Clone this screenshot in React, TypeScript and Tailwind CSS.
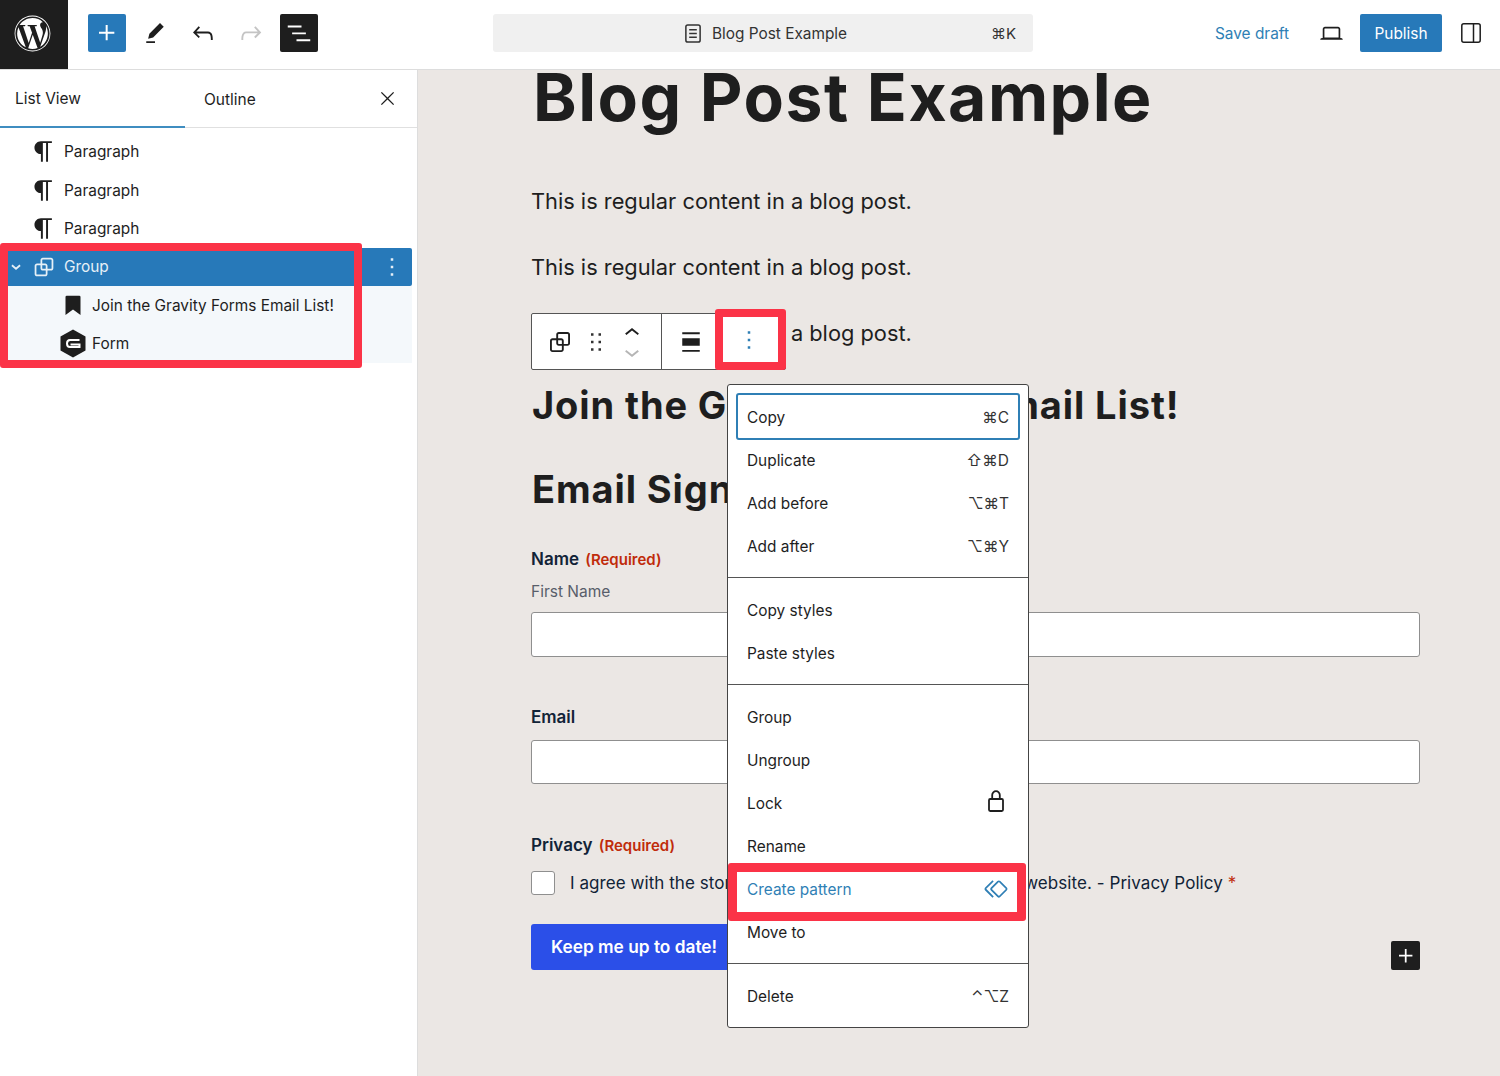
import { FaWordpress } from "react-icons/fa";

const P = {
	plus: "M11 12.5V17.5H12.5V12.5H17.5V11H12.5V6H11V11H6V12.5H11Z",
	pencil: "m19 7-3-3-8.5 8.5-1 4 4-1L19 7Zm-7 11.5H5V20h7v-1.5Z",
	undo: "M18.3 11.7c-.6-.6-1.4-.9-2.3-.9H6.7l2.9-3.3-1.1-1-4.5 5L8.5 16l1-1-2.7-2.7H16c.5 0 .9.2 1.3.5 1 1 1 3.4 1 4.5v.3h1.5v-.2c0-1.5 0-4.3-1.5-5.7z",
	redo: "M15.6 6.5l-1.1 1 2.9 3.3H8c-.9 0-1.7.3-2.3.9-1.4 1.5-1.4 4.2-1.4 5.6v.2h1.5v-.3c0-1.1 0-3.5 1-4.5.3-.3.7-.5 1.3-.5h9.2L14.5 15l1.1 1.1 4.6-4.6-4.6-5z",
	listView: "M3 6h11v1.5H3V6Zm3.5 5.5h11V13h-11v-1.5ZM21 17H10v1.5h11V17Z",
	close: "m13.06 12 6.47-6.47-1.06-1.06L12 10.94 5.53 4.47 4.47 5.53 10.94 12l-6.47 6.47 1.06 1.06L12 13.06l6.47 6.47 1.06-1.06L13.06 12Z",
	laptop: "M20.5 16h-.7V8c0-1.1-.9-2-2-2H6.2c-1.1 0-2 .9-2 2v8h-.7c-.8 0-1.5.7-1.5 1.5h20c0-.8-.7-1.5-1.5-1.5zM5.7 8c0-.3.2-.5.5-.5h11.6c.3 0 .5.2.5.5v7.6H5.7V8z",
	paragraph: "m9.99609 14v-.2251l.00391.0001v6.225h1.5v-14.5h2.5v14.5h1.5v-14.5h3v-1.5h-8.50391c-2.76142 0-5 2.23858-5 5 0 2.7614 2.23858 5 5 5z",
	group: "M18 4h-7c-1.1 0-2 .9-2 2v3H6c-1.1 0-2 .9-2 2v7c0 1.1.9 2 2 2h7c1.1 0 2-.9 2-2v-3h3c1.1 0 2-.9 2-2V6c0-1.1-.9-2-2-2zm-4.5 14c0 .3-.2.5-.5.5H6c-.3 0-.5-.2-.5-.5v-7c0-.3.2-.5.5-.5h3V13c0 1.1.9 2 2 2h2.5v3zm0-4.5H11c-.3 0-.5-.2-.5-.5v-2.5H13c.3 0 .5.2.5.5v2.5zm5-.5c0 .3-.2.5-.5.5h-3V11c0-1.1-.9-2-2-2h-2.5V6c0-.3.2-.5.5-.5h7c.3 0 .5.2.5.5v7z",
	more: "M13 19h-2v-2h2v2zm0-6h-2v-2h2v2zm0-6h-2V5h2v2z",
	drag: "M8 7h2V5H8v2zm0 6h2v-2H8v2zm0 6h2v-2H8v2zm6-14v2h2V5h-2zm0 8h2v-2h-2v2zm0 6h2v-2h-2v2z",
	up: "M6.5 12.4L12 8l5.5 4.4-.9 1.2L12 10l-4.5 3.6-1-1.2z",
	down: "M17.5 11.6L12 16l-5.5-4.4.9-1.2L12 14l4.5-3.6 1 1.2z",
	align: "M5 15h14V9H5v6zm0 4.8h14v-1.5H5v1.5zM5 4.2v1.5h14V4.2H5z",
	pattern: "M21.3 10.8l-5.6-5.6c-.7-.7-1.8-.7-2.5 0l-5.6 5.6c-.7.7-.7 1.8 0 2.5l5.6 5.6c.3.3.8.5 1.2.5s.9-.2 1.2-.5l5.6-5.6c.8-.7.8-1.9.1-2.5zm-1 1.4l-5.6 5.6c-.1.1-.3.1-.4 0l-5.6-5.6c-.1-.1-.1-.3 0-.4l5.6-5.6s.1-.1.2-.1.1 0 .2.1l5.6 5.6c.1.1.1.3 0 .4zm-16.6-.4L10 5.5l-1-1-6.3 6.3c-.7.7-.7 1.8 0 2.5L9 19.5l1.1-1.1-6.3-6.3c-.2 0-.2-.2-.1-.3z",
	bookmark: "M7 4.5h10a1 1 0 0 1 1 1V20l-6-4.4L6 20V5.5a1 1 0 0 1 1-1z",
};

function Icon({ d, className }: { d: string; className?: string }) {
	return (
		<svg viewBox="0 0 24 24" fill="currentColor" className={className}>
			<path d={d} />
		</svg>
	);
}

function ListRow({
	icon,
	label,
	className,
}: {
	icon: React.ReactNode;
	label: string;
	className?: string;
}) {
	return (
		<div className={`flex h-[38.4px] items-center text-[15.4px] ${className ?? ""}`}>
			{icon}
			<span>{label}</span>
		</div>
	);
}

function MenuItem({
	label,
	right,
	className,
}: {
	label: string;
	right?: React.ReactNode;
	className?: string;
}) {
	return (
		<div className={`flex h-[43px] items-center justify-between px-[19px] text-[15.4px] ${className ?? ""}`}>
			<span className="pt-[2px]">{label}</span>
			{right}
		</div>
	);
}

function Keys({ children }: { children: string }) {
	return <span className="pt-[2px] text-[15.5px] text-[#333]">{children}</span>;
}

const paragraphIcon = <Icon d={P.paragraph} className="ml-[28px] mr-[5px] h-[31px] w-[31px]" />;

function Sidebar() {
	return (
		<aside className="relative w-[418px] shrink-0 border-r border-[#ddd] bg-white text-[#1e1e1e]">
			<div className="flex h-[58px] items-center border-b border-[#e0e0e0] text-[15.5px]">
				<div className="flex h-[58px] w-[185px] items-center border-b-2 border-[#3f8dc0] pl-[15px] pt-[2px]">List View</div>
				<div className="pl-[19px] pt-[2px]">Outline</div>
				<Icon d={P.close} className="ml-auto mr-[19px] h-[21px] w-[21px]" />
			</div>
			<div className="pt-[4.5px]">
				<ListRow icon={paragraphIcon} label="Paragraph" />
				<ListRow icon={paragraphIcon} label="Paragraph" />
				<ListRow icon={paragraphIcon} label="Paragraph" />
				<div className="mr-[5px] flex h-[38.4px] items-center rounded-r-[2px] bg-[#2779b9] text-[15.4px] text-[#e6f0f7]">
					<svg viewBox="0 0 24 24" className="ml-[9px] mr-[7px] h-[14px] w-[14px]" fill="none" stroke="currentColor" strokeWidth="3">
						<path d="M5 9l7 6 7-6" />
					</svg>
					<Icon d={P.group} className="mr-[6px] h-[28px] w-[28px]" />
					<span>Group</span>
					<Icon d={P.more} className="ml-auto mr-[5px] h-[30px] w-[30px]" />
				</div>
				<div className="mr-[5px] h-[77px] bg-[#f4f8fb]">
					<ListRow
						label="Join the Gravity Forms Email List!"
						className="pl-[58px]"
						icon={<Icon d={P.bookmark} className="mr-[4px] h-[30px] w-[30px]" />}
					/>
					<ListRow
						label="Form"
						className="pl-[60px]"
						icon={
							<svg viewBox="0 0 26 28" className="mr-[6px] h-[29px] w-[26px]">
								<path d="M13 0l12.5 7v14L13 28 .5 21V7z" fill="#1e1e1e" />
								<path d="M19.5 10.5H10q-3 0-3 3.5t3 3.5h9.5v-2.6H10.5" fill="none" stroke="#fff" strokeWidth="2" />
							</svg>
						}
					/>
				</div>
			</div>
			<div className="absolute left-0 top-[173px] h-[125px] w-[362px] rounded-[3px] border-[8.5px] border-[#fb3347]" />
		</aside>
	);
}

function Canvas() {
	return (
		<main className="relative flex-1 overflow-hidden bg-[#ebe7e4] pl-[113px] pr-[80px] font-['Inter',sans-serif] text-[#1e1e1e]">
			<h1 className="mt-[-13px] ml-[2px] text-[66px] leading-[80px] font-bold tracking-[1.5px] whitespace-nowrap">Blog Post Example</h1>
			<p className="mt-[46px] text-[21.8px] leading-[36px]">This is regular content in a blog post.</p>
			<p className="mt-[30px] text-[21.8px] leading-[36px]">This is regular content in a blog post.</p>
			<p className="mt-[30px] text-[21.8px] leading-[36px]">This is regular content in a blog post.</p>
			<h2 className="mt-[29px] ml-[1px] text-[38px] leading-[50px] font-bold tracking-[0.9px] whitespace-nowrap">Join the Gravity Forms Email List!</h2>
			<h2 className="mt-[34px] ml-[1px] text-[38px] leading-[50px] font-bold tracking-[0.9px] whitespace-nowrap">Email Signup</h2>

			<div className="mt-[33px] text-[17px] leading-[24px] font-semibold text-[#112337]">
				Name <span className="ml-[2px] text-[15px] font-semibold text-[#c02b0a]">(Required)</span>
			</div>
			<div className="mt-[8px] text-[15.5px] leading-[24px] text-[#585e6a]">First Name</div>
			<div className="mt-[8px] h-[45px] rounded-[3px] border border-[#8f8f8f] bg-white" />
			<div className="mt-[48px] text-[17px] leading-[24px] font-semibold text-[#112337]">Email</div>
			<div className="mt-[11px] h-[44px] rounded-[3px] border border-[#8f8f8f] bg-white" />
			<div className="mt-[49px] text-[17px] leading-[24px] font-semibold text-[#112337]">
				Privacy <span className="ml-[2px] text-[15px] font-semibold text-[#c02b0a]">(Required)</span>
			</div>
			<div className="mt-[13px] flex items-center text-[17px] leading-[24px] tracking-[0.06px] text-[#112337]">
				<span className="mr-[15px] h-[24px] w-[24px] shrink-0 rounded-[3px] border border-[#8f8f8f] bg-white" />
				<span className="whitespace-nowrap">I agree with the storage and handling of my data by this website. - Privacy Policy <span className="text-[#c02b0a]">*</span></span>
			</div>
			<div className="mt-[29px] flex items-end justify-between">
				<div className="flex h-[46px] w-[204px] items-center rounded-[3px] bg-[#2b4fe8] pl-[20px] text-[17.3px] font-semibold whitespace-nowrap text-white">
					Keep me up to date!
				</div>
				<div className="flex h-[29px] w-[29px] items-center justify-center rounded-[2px] bg-[#1e1e1e] text-white">
					<Icon d={P.plus} className="h-[28px] w-[28px]" />
				</div>
			</div>

			{/* block toolbar */}
			<div className="absolute left-[113px] top-[243px] flex h-[57px] w-[255px] items-center rounded-[2px] border border-[#555] bg-white">
				<Icon d={P.group} className="ml-[13px] h-[30px] w-[30px]" />
				<Icon d={P.drag} className="ml-[6px] h-[30px] w-[30px] text-[#333]" />
				<div className="ml-[6px] flex w-[30px] flex-col items-center">
					<Icon d={P.up} className="-mb-[11px] mt-[1px] h-[30px] w-[30px]" />
					<Icon d={P.down} className="h-[30px] w-[30px] text-[#b5b5b5]" />
				</div>
				<div className="ml-[14px] h-full w-px bg-[#555]" />
				<Icon d={P.align} className="ml-[14px] h-[30px] w-[30px]" />
			</div>
			<div className="absolute left-[297px] top-[239px] flex h-[61px] w-[71px] items-center justify-center rounded-[3px] border-[8.5px] border-[#fb3347] bg-white pr-[4px] text-[#2f7fb5]">
				<Icon d={P.more} className="h-[30px] w-[30px]" />
			</div>

			{/* options menu */}
			<div className="absolute left-[309px] top-[314px] w-[302px] rounded-[3px] border border-[#444] bg-white text-[#1e1e1e]">
				<div className="relative border-b border-[#555] py-[10px]">
					<div className="absolute left-[8px] right-[8px] top-[8px] h-[47px] rounded-[3px] border-2 border-[#2f7fb5]" />
					<MenuItem label="Copy" right={<Keys>⌘C</Keys>} />
					<MenuItem label="Duplicate" right={<Keys>⇧⌘D</Keys>} />
					<MenuItem label="Add before" right={<Keys>⌥⌘T</Keys>} />
					<MenuItem label="Add after" right={<Keys>⌥⌘Y</Keys>} />
				</div>
				<div className="border-b border-[#555] py-[10px]">
					<MenuItem label="Copy styles" />
					<MenuItem label="Paste styles" />
				</div>
				<div className="relative border-b border-[#555] py-[10px]">
					<MenuItem label="Group" />
					<MenuItem label="Ungroup" />
					<MenuItem
						label="Lock"
						right={
							<svg viewBox="0 0 18 24" className="-mt-[3px] mr-[4px] h-[24px] w-[18px]" fill="none" stroke="#1e1e1e" strokeWidth="1.8">
								<rect x="2" y="10" width="14" height="12" rx="1.2" />
								<path d="M5.2 10V6a3.8 3.8 0 0 1 7.6 0V10" />
							</svg>
						}
					/>
					<MenuItem label="Rename" />
					<MenuItem
						label="Create pattern"
						className="text-[#2f7fb5]"
						right={<Icon d={P.pattern} className="-mr-[1px] h-[28px] w-[28px]" />}
					/>
					<MenuItem label="Move to" />
					<div className="absolute left-0 right-[2px] top-[178px] h-[58px] rounded-[3px] border-[9px] border-[#fb3347]" />
				</div>
				<div className="py-[10px]">
					<MenuItem label="Delete" right={<Keys>⌃⌥Z</Keys>} />
				</div>
			</div>
		</main>
	);
}

export default function App() {
	return (
		<div className="flex h-[1076px] w-[1500px] flex-col overflow-hidden bg-white font-['Inter',sans-serif] text-[#1e1e1e]">
			<header className="relative z-10 flex h-[70px] shrink-0 items-center border-b border-[#ddd] bg-white pb-[3px]">
				<div className="flex h-[69px] w-[68px] items-center justify-center self-start bg-[#1e1e1e] pb-[3px] pr-[4px] text-white">
					<FaWordpress className="h-[37px] w-[37px]" />
				</div>
				<div className="ml-[20px] flex h-[38px] w-[38px] items-center justify-center rounded-[2px] bg-[#2779b9] text-white">
					<Icon d={P.plus} className="h-[32px] w-[32px]" />
				</div>
				<Icon d={P.pencil} className="ml-[14px] h-[30px] w-[30px]" />
				<Icon d={P.undo} className="ml-[18px] h-[30px] w-[30px]" />
				<Icon d={P.redo} className="ml-[18px] h-[30px] w-[30px] text-[#c4c4c4]" />
				<div className="ml-[14px] flex h-[38px] w-[38px] items-center justify-center rounded-[2px] bg-[#1e1e1e] text-white">
					<Icon d={P.listView} className="h-[30px] w-[30px]" />
				</div>
				<div className="relative ml-[175px] flex h-[38px] w-[540px] items-center justify-center rounded-[3px] bg-[#f0f0f0] pl-[5px] text-[15.4px] text-[#333]">
					<svg viewBox="0 0 18 20" className="mr-[10px] h-[19px] w-[18px]" fill="none" stroke="#333" strokeWidth="1.6">
						<rect x="1.5" y="1" width="15" height="18" rx="2" />
						<path d="M5 6h8M5 10h8M5 14h8" />
					</svg>
					<span className="pt-[2px]">Blog Post Example</span>
					<span className="absolute right-[17px] pt-[2px] text-[15px]">⌘K</span>
				</div>
				<span className="ml-auto pt-[2px] text-[15.4px] text-[#2f7fb5]">Save draft</span>
				<Icon d={P.laptop} className="ml-[29px] h-[27px] w-[27px]" />
				<div className="ml-[15px] flex h-[38px] w-[82px] items-center justify-center rounded-[2px] bg-[#2779b9] pt-[1px] text-[15.4px] text-white">Publish</div>
				<svg viewBox="0 0 20 20" className="ml-[19px] mr-[19px] h-[20px] w-[20px]" fill="none" stroke="#1e1e1e" strokeWidth="1.5">
					<rect x=".8" y=".8" width="18.4" height="18.4" rx="2" />
					<path d="M12.5 1v18" />
				</svg>
			</header>
			<div className="flex min-h-0 flex-1">
				<Sidebar />
				<Canvas />
			</div>
		</div>
	);
}
